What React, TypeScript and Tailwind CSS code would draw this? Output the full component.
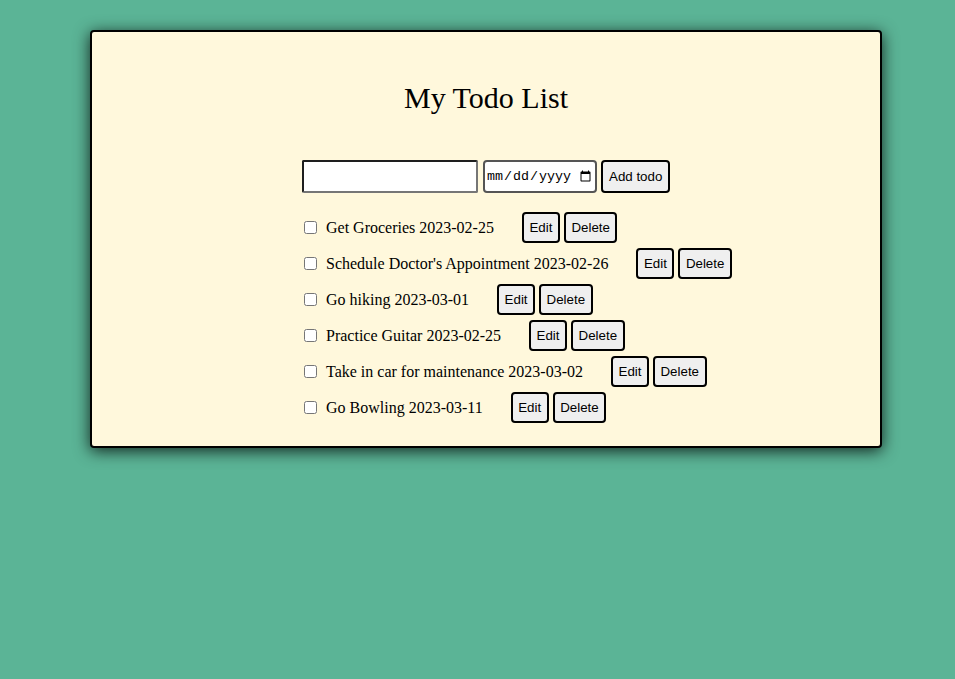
import React from "react";

const todos = [
  "Get Groceries 2023-02-25",
  "Schedule Doctor's Appointment 2023-02-26",
  "Go hiking 2023-03-01",
  "Practice Guitar 2023-02-25",
  "Take in car for maintenance 2023-03-02",
  "Go Bowling 2023-03-11",
];

const btnBase =
  "bg-[#efefef] border-2 border-black rounded-[4px] text-[13.33px] text-black leading-none [font-family:'Liberation_Sans',Arial,sans-serif] shrink-0";

export default function App() {
  return (
    <div className="min-h-screen w-full bg-[#5bb496] pt-[30px]">
      <div className="ml-[90px] w-[792px] bg-[#fff8dc] border-2 border-black rounded-[4px] shadow-[0_3px_16px_rgba(0,0,0,0.8)] pt-[49px] pb-[23px] [font-family:'Liberation_Serif','Times_New_Roman',serif] text-black">
        <h1 className="text-center text-[30px] leading-[34px]">My Todo List</h1>
        <div className="w-[367px] ml-[210px] mt-[45px]">
          <div className="flex items-center gap-[4px] h-[33px]">
            <input
              type="text"
              className="w-[176px] h-[33px] bg-white border-2 border-t-[#1e1e1e] border-l-[#1e1e1e] border-b-[#767676] border-r-[#767676] rounded-[2px] outline-none"
            />
            <input
              type="date"
              className="w-[114px] h-[33px] ml-[1px] bg-white border-2 border-[#555] rounded-[4px] px-[1px] text-[13.33px] text-black [font-family:'Liberation_Mono',monospace] outline-none"
            />
            <button className={btnBase + " h-[33px] px-[6px]"}>Add todo</button>
          </div>
          <div className="flex flex-col gap-[5px] mt-[19px]">
            {todos.map((t) => (
              <div key={t} className="flex items-center h-[31px] whitespace-nowrap">
                <input
                  type="checkbox"
                  className="w-[13px] h-[13px] ml-[2px] mr-[9px] mb-[1px] shrink-0"
                />
                <span className="text-[16px]">{t}</span>
                <div className="flex gap-[4px] ml-[28px]">
                  <button className={btnBase + " h-[31px] px-[5.5px]"}>Edit</button>
                  <button className={btnBase + " h-[31px] px-[5.5px]"}>Delete</button>
                </div>
              </div>
            ))}
          </div>
        </div>
      </div>
    </div>
  );
}
